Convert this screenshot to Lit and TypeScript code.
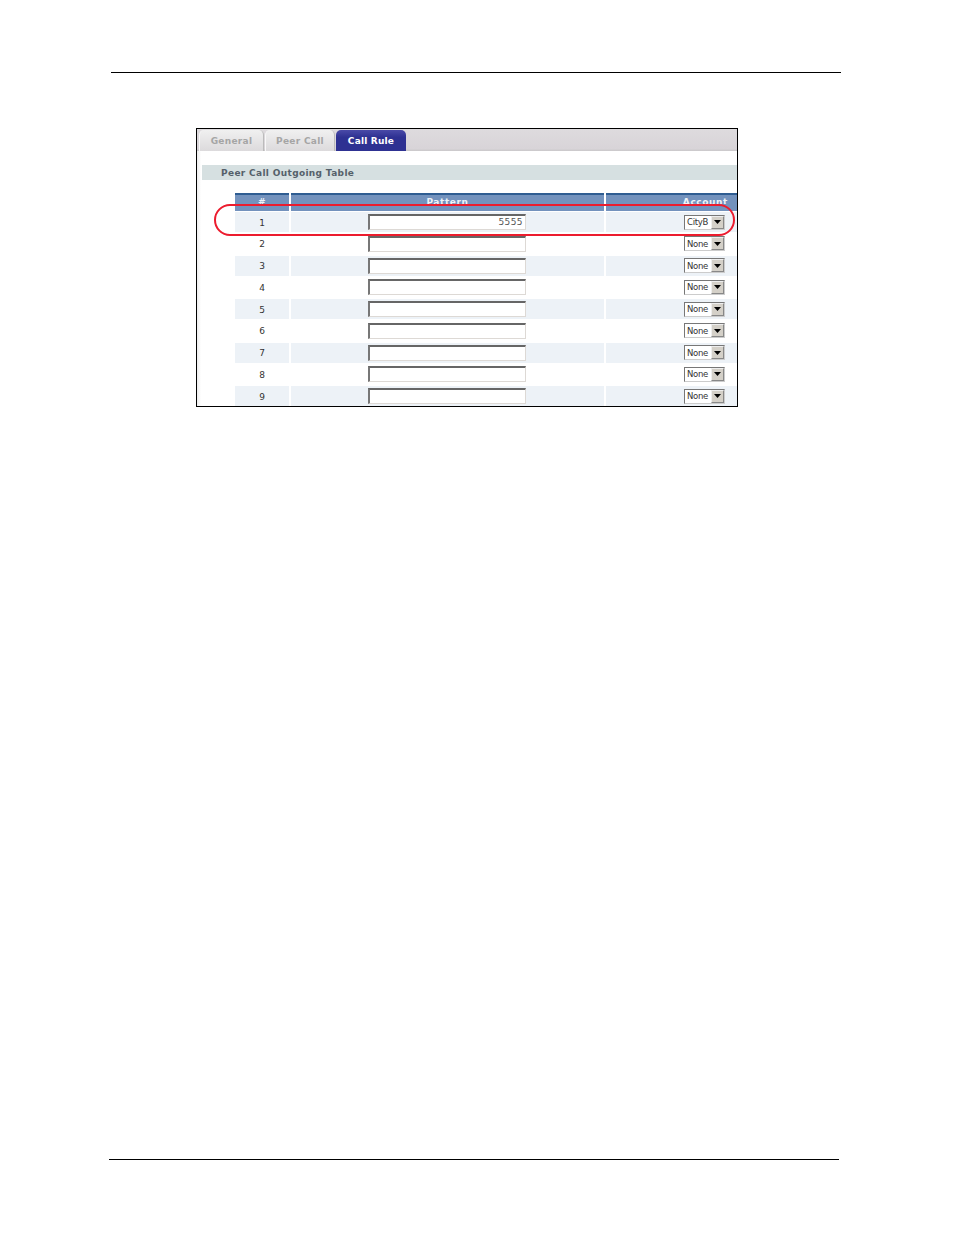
import { LitElement, html, css } from "lit";
import { customElement } from "lit/decorators.js";

@customElement("app-root")
export class AppRoot extends LitElement {
  static styles = css`
    :host { display: block; width: 954px; height: 1235px; background: #fff; overflow: hidden; font-family: "DejaVu Sans", Verdana, sans-serif; }
    .top-rule { width: 730px; height: 1px; background: #000; margin: 72px 0 0 111px; }
    .bottom-rule { width: 730px; height: 1px; background: #000; margin: 752px 0 0 109px; }
    .frame { position: relative; box-sizing: border-box; width: 542px; height: 279px; margin: 55px 0 0 196px; border: 1px solid #000; overflow: hidden; background: linear-gradient(90deg, #ececec 0, #f6f6f6 2px, #fff 4px); }
    .tabbar { display: flex; align-items: flex-end; gap: 1px; height: 22px; padding-left: 2px; box-sizing: border-box; background: linear-gradient(#dedbde, #d8d4d8 90%, #c9c7c9); }
    .tab { box-sizing: border-box; height: 21px; display: flex; align-items: center; justify-content: center; border-radius: 5px 5px 0 0; font-size: 9px; font-weight: 700; letter-spacing: .3px; color: #a5a5a5; background: linear-gradient(#f0f0f0, #dcdadc); border-right: 1px solid #bbb; border-left: 1px solid #f8f8f8; }
    .tab.general { width: 65px; }
    .tab.peer { width: 70px; }
    .tab.active { width: 70px; color: #fff; letter-spacing: .2px; background: linear-gradient(#4a4aa8, #2e3192 35%, #2e3192); border: 0; }
    .section { box-sizing: border-box; height: 15px; margin: 14px 0 0 5px; padding: 1px 0 0 19px; background: #d6e0e1; font-size: 9px; font-weight: 700; letter-spacing: .34px; line-height: 15px; color: #55606a; }
    .table { margin: 13px 0 0 38px; }
    .row { display: grid; grid-template-columns: 54px 313px 133px; column-gap: 2px; height: 21.75px; }
    .row.head { height: 19px; }
    .cell { height: 20px; display: flex; align-items: center; font-size: 9px; color: #333; }
    .row.tint .cell { background: #edf2f7; }
    .num { justify-content: center; padding-top: 1px; box-sizing: border-box; }
    .pat { justify-content: center; padding: 0 1px 0 0; box-sizing: border-box; }
    .acct { justify-content: flex-end; padding: 0 14px 0 0; box-sizing: border-box; }
    .hcell { height: 18px; box-sizing: border-box; border-top: 2px solid #2f5d92; background: #7392bd; color: #eef2f8; font-size: 9px; font-weight: 700; letter-spacing: .6px; text-align: center; overflow: hidden; }
    .hcell span { display: block; height: 9px; line-height: 15px; overflow: hidden; }
    .hcell.a { text-align: right; padding-right: 11px; }
    .input { box-sizing: border-box; width: 158px; height: 16px; background: #fff; border: 1px solid #ddd9d5; border-top: 2px solid #666; border-left: 2px solid #777; text-align: right; padding-right: 2px; font-size: 9px; line-height: 13px; letter-spacing: .4px; color: #555; }
    .select { box-sizing: border-box; width: 41px; height: 15px; display: flex; align-items: center; justify-content: space-between; background: #fff; border: 1px solid #777; border-right-color: #ccc; border-bottom-color: #ccc; padding: 0 0 0 2px; font-size: 8.5px; letter-spacing: -.3px; color: #333; }
    .btn { width: 13px; height: 13px; background: #d4d0c8; border: 1px solid; border-color: #eee #888 #888 #eee; box-sizing: border-box; display: flex; align-items: center; justify-content: center; }
    .btn svg { display: block; }
    .ring { position: absolute; left: 17px; top: 75px; width: 521px; height: 32px; box-sizing: border-box; border: 2px solid #ec1c2e; border-radius: 16px; }
  `;

  render() {
    const rows = [1, 2, 3, 4, 5, 6, 7, 8, 9];
    return html`
      <div class="top-rule"></div>
      <div class="frame">
        <div class="tabbar">
          <div class="tab general">General</div>
          <div class="tab peer">Peer Call</div>
          <div class="tab active">Call Rule</div>
        </div>
        <div class="section">Peer Call Outgoing Table</div>
        <div class="table">
          <div class="row head">
            <div class="hcell"><span>#</span></div>
            <div class="hcell"><span>Pattern</span></div>
            <div class="hcell a"><span>Account</span></div>
          </div>
          ${rows.map(
            (n) => html`
              <div class="row ${n % 2 ? "tint" : ""}">
                <div class="cell num">${n}</div>
                <div class="cell pat"><div class="input">${n === 1 ? "5555" : ""}</div></div>
                <div class="cell acct">
                  <div class="select">
                    <span>${n === 1 ? "CityB" : "None"}</span>
                    <div class="btn"><svg width="7" height="4" viewBox="0 0 7 4"><path d="M0 0h7L3.5 4z" fill="#000"/></svg></div>
                  </div>
                </div>
              </div>
            `
          )}
        </div>
        <div class="ring"></div>
      </div>
      <div class="bottom-rule"></div>
    `;
  }
}
